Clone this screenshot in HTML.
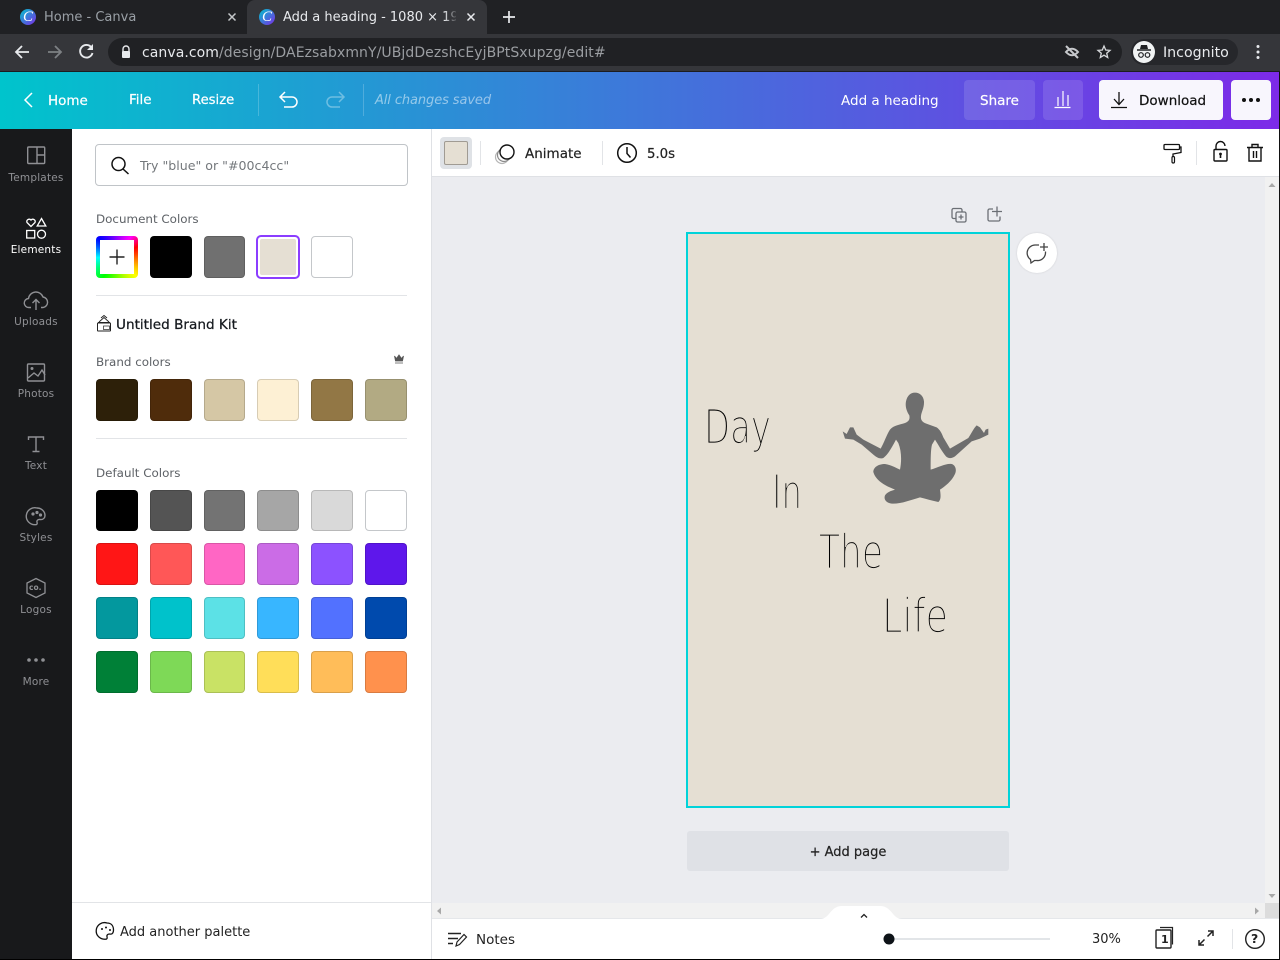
<!DOCTYPE html>
<html><head><meta charset="utf-8"><style>
html,body{margin:0;padding:0;width:1280px;height:960px;overflow:hidden;background:#ebecf0}
body{font-family:"DejaVu Sans","Liberation Sans",sans-serif;position:relative}
.a{position:absolute}
.t{position:absolute;white-space:nowrap;line-height:20px;height:20px}
.s{position:absolute;width:42px;height:42px;border-radius:4px;box-sizing:border-box;border:1px solid rgba(0,0,0,.15)}
svg{position:absolute;overflow:visible;fill:none}
.side{position:absolute;left:0;width:72px;text-align:center;font-size:10.500px;letter-spacing:.2px;color:#8f9094;line-height:14px}
</style></head><body>
<!-- chrome -->
<div class="a" style="left:0;top:0;width:1280px;height:34px;background:#202124"></div>
<div class="a" style="left:0;top:34px;width:1280px;height:37px;background:#35363a"></div>
<div class="a" style="left:0;top:71px;width:1280px;height:1px;background:#1c1d20"></div>
<div class="a" style="left:247px;top:0;width:240px;height:34px;background:#35363a;border-radius:8px 8px 0 0"></div>
<div class="a" style="left:20px;top:9px;width:16px;height:16px;border-radius:8px;background:linear-gradient(135deg,#00c4cc,#7d2ae8)"></div>
<div class="t" style="left:23px;top:7px;font:italic 15px/20px 'Liberation Serif',serif;color:#fff">C</div>
<div class="a" style="left:259px;top:9px;width:16px;height:16px;border-radius:8px;background:linear-gradient(135deg,#00c4cc,#7d2ae8)"></div>
<div class="t" style="left:262px;top:7px;font:italic 15px/20px 'Liberation Serif',serif;color:#fff">C</div>
<div class="t" style="left:44px;top:8px;font-size:13px;color:#9aa0a6">Home - Canva</div>
<div class="t" style="left:283px;top:8px;width:173px;overflow:hidden;font-size:13px;color:#e8eaed">Add a heading - 1080 × 1920</div>
<div class="a" style="left:444px;top:2px;width:14px;height:30px;background:linear-gradient(90deg,rgba(53,54,58,0),#35363a)"></div>
<svg style="left:0;top:0" width="1280" height="72">
<path d="M228.500 13.500l7 7M235.500 13.500l-7 7" stroke="#c4c7c9" stroke-width="1.500"/>
<path d="M467.500 13.500l7 7M474.500 13.500l-7 7" stroke="#e8eaed" stroke-width="1.500"/>
<path d="M509 11v12M503 17h12" stroke="#e8eaed" stroke-width="1.700"/>
<path d="M29 52H16M22 46l-6 6 6 6" stroke="#e8eaed" stroke-width="1.800"/>
<path d="M48 52h13M55 46l6 6-6 6" stroke="#7e8184" stroke-width="1.800"/>
<path d="M91.500 47.500A6.300 6.300 0 1 0 92.500 53" stroke="#e8eaed" stroke-width="1.900"/><path d="M93 44v6h-6z" fill="#e8eaed"/>
</svg>
<div class="a" style="left:108px;top:38px;width:1014px;height:28px;border-radius:14px;background:#202124"></div>
<svg style="left:0;top:0" width="1280" height="72">
<path d="M123 51.500v-2.500a3 3 0 0 1 6 0v2.500" stroke="#e8eaed" stroke-width="1.400"/><rect x="122" y="51" width="8" height="7" rx="1" fill="#e8eaed"/>
<path d="M1066 52q6-6.500 12 0-6 6.500-12 0z" stroke="#c7c9cc" stroke-width="2"/><path d="M1066 46l12 12" stroke="#c7c9cc" stroke-width="2"/>
<path d="M1104 46l1.700 4 4.300.4-3.300 2.800 1 4.300-3.700-2.300-3.700 2.300 1-4.300-3.300-2.800 4.300-.4z" stroke="#d7d9dc" stroke-width="1.300"/>
<circle cx="1258" cy="46.500" r="1.500" fill="#e8eaed"/><circle cx="1258" cy="52" r="1.500" fill="#e8eaed"/><circle cx="1258" cy="57.500" r="1.500" fill="#e8eaed"/>
</svg>
<div class="t" style="left:142px;top:43px;font-size:14px;color:#9a9da1;letter-spacing:.07px"><span style="color:#e8eaed">canva.com</span>/design/DAEzsabxmnY/UBjdDezshcEyjBPtSxupzg/edit#</div>
<div class="a" style="left:1131px;top:39px;width:107px;height:26px;border-radius:13px;background:#26272b"></div>
<div class="a" style="left:1133px;top:41px;width:22px;height:22px;border-radius:11px;background:#f1f3f4"></div>
<svg style="left:0;top:0" width="1280" height="72">
<path d="M1137 50h14" stroke="#202124" stroke-width="1.500"/><path d="M1140 49l1-4h6l1 4z" fill="#202124"/><circle cx="1141" cy="55" r="2.300" stroke="#202124" stroke-width="1.200"/><circle cx="1147.500" cy="55" r="2.300" stroke="#202124" stroke-width="1.200"/>
</svg>
<div class="t" style="left:1163px;top:43px;font-size:14.200px;color:#e8eaed">Incognito</div>

<!-- header -->
<div class="a" style="left:0;top:72px;width:1280px;height:57px;background:linear-gradient(90deg,#00c4cc,#7d2ae8)"></div>
<svg style="left:0;top:0" width="1280" height="129">
<path d="M32 93l-7 7 7 7" stroke="#fff" stroke-width="1.500"/>
<path d="M258.500 84v32M363.500 84v32" stroke="rgba(255,255,255,.2)"/>
<path d="M281 97h11a5 5 0 0 1 0 10h-8M285 92l-5 5 5 5" stroke="#fff" stroke-width="1.500"/>
<path d="M343 97h-11a5 5 0 0 0 0 10h8M339 92l5 5-5 5" stroke="rgba(255,255,255,.35)" stroke-width="1.500"/>
</svg>
<div class="t" style="left:48px;top:91px;font-size:13.500px;color:#fff;-webkit-text-stroke:.2px #fff">Home</div>
<div class="t" style="left:129px;top:90px;font-size:13.500px;color:#fff;-webkit-text-stroke:.2px #fff">File</div>
<div class="t" style="left:192px;top:91px;font-size:13.200px;color:#fff;-webkit-text-stroke:.2px #fff">Resize</div>
<div class="t" style="left:375px;top:91px;font-size:13px;font-style:italic;color:rgba(255,255,255,.5);letter-spacing:-.1px">All changes saved</div>
<div class="t" style="left:841px;top:91px;font-size:13.500px;color:#fff">Add a heading</div>
<div class="a" style="left:964px;top:80px;width:71px;height:40px;border-radius:4px;background:rgba(255,255,255,.12)"></div>
<div class="t" style="left:980px;top:91px;font-size:13.500px;color:#fff;-webkit-text-stroke:.2px #fff">Share</div>
<div class="a" style="left:1043px;top:80px;width:40px;height:40px;border-radius:4px;background:rgba(255,255,255,.12)"></div>
<div class="a" style="left:1099px;top:80px;width:124px;height:40px;border-radius:4px;background:#f8f6fd"></div>
<div class="t" style="left:1139px;top:91px;font-size:13.500px;color:#111;-webkit-text-stroke:.2px #111">Download</div>
<div class="a" style="left:1231px;top:80px;width:40px;height:40px;border-radius:4px;background:#f8f6fd"></div>
<svg style="left:0;top:0" width="1280" height="129">
<path d="M1054.500 107.500h16M1058 106v-9M1063 106V91M1068 106v-11" stroke="#fff" stroke-width="1.200"/>
<path d="M1111 107.500h16M1119 92v12M1114 99l5 5.500 5-5.500" stroke="#111" stroke-width="1.300"/>
<circle cx="1244" cy="100" r="2" fill="#111"/><circle cx="1251" cy="100" r="2" fill="#111"/><circle cx="1258" cy="100" r="2" fill="#111"/>
</svg>

<!-- sidebar -->
<div class="a" style="left:0;top:129px;width:72px;height:831px;background:#18191b"></div>
<svg style="left:0;top:0" width="72" height="700">
<g stroke="#8f9094" stroke-width="1.400"><rect x="27.700" y="147" width="17" height="16.500" rx="1"/><path d="M37 147v16.500M37 155h7.700"/></g>
<g stroke="#fff" stroke-width="1.300"><path d="M31 226.500l-4-4a2.400 2.400 0 0 1 4-2.500 2.400 2.400 0 0 1 4 2.500z"/><path d="M41.500 218.500l4.300 7.500h-8.600z"/><rect x="26.700" y="230.500" width="8" height="7.500"/><circle cx="41.500" cy="234.200" r="4"/></g>
<g stroke="#8f9094" stroke-width="1.400"><path d="M31 307.500h-2a4.500 4.500 0 0 1-.500-9 7.500 7.500 0 0 1 14.500-1.500 5.300 5.300 0 0 1 0 10.500h-2"/><path d="M36 310v-10M32.500 303l3.500-3.500 3.500 3.500"/></g>
<g stroke="#8f9094" stroke-width="1.400"><rect x="27.500" y="364" width="17" height="17" rx="1"/><path d="M28 378l6-5 4 3 4-6 3 5"/><circle cx="32" cy="368.500" r=".8" fill="#8f9094"/></g>
<g stroke="#8f9094" stroke-width="1.400"><path d="M28.500 440v-3h15v3M36 437v14.500M32.500 451.500h7"/></g>
<g stroke="#8f9094" stroke-width="1.400"><path d="M37 508a8.500 8.500 0 1 0-2 16.700c2 .2 2.500-1 2-2.500-.5-1.700 1-3 3-2.700 3.500.5 5-2 5-4 0-4-3.500-7.500-8-7.500z"/><circle cx="33" cy="514" r=".9" fill="#8f9094"/><circle cx="37" cy="512.500" r=".9" fill="#8f9094"/><circle cx="40.500" cy="515" r=".9" fill="#8f9094"/></g>
<g stroke="#8f9094" stroke-width="1.300"><path d="M36 578.500l9 4.500v10l-9 4.500-9-4.500v-10z"/></g>
<circle cx="29" cy="660" r="1.800" fill="#8f9094"/><circle cx="36" cy="660" r="1.800" fill="#8f9094"/><circle cx="43" cy="660" r="1.800" fill="#8f9094"/>
</svg>
<div class="t" style="left:29px;top:578px;font-size:7.500px;font-weight:bold;color:#8f9094">co.</div>
<div class="side" style="top:171px">Templates</div>
<div class="side" style="top:243px;color:#fff">Elements</div>
<div class="side" style="top:315px">Uploads</div>
<div class="side" style="top:387px">Photos</div>
<div class="side" style="top:459px">Text</div>
<div class="side" style="top:531px">Styles</div>
<div class="side" style="top:603px">Logos</div>
<div class="side" style="top:675px">More</div>

<!-- panel -->
<div class="a" style="left:72px;top:129px;width:359px;height:831px;background:#fff;border-right:1px solid #dfe1e5"></div>
<div class="a" style="left:95px;top:144px;width:311px;height:40px;border:1px solid #c0c4c8;border-radius:4px"></div>
<svg style="left:0;top:0" width="432" height="960">
<circle cx="118.500" cy="164" r="6.500" stroke="#111" stroke-width="1.500"/><path d="M123 169l5.500 5" stroke="#111" stroke-width="1.500"/>
<path d="M96 295.500h311M96 438.500h311M72 902.500h359" stroke="#e2e4e7"/>
<path d="M98 322.500h12M99 322l5-4.500 5 4.500M101 318l3-2.500 3 2.500" stroke="#222" stroke-width=".9"/><rect x="97.500" y="323" width="13" height="8" rx=".5" stroke="#222"/><rect x="103.500" y="326" width="6" height="3.500" stroke="#222" stroke-width=".7"/>
<path d="M394.500 356l2 2.500 2.500-3.500 2.500 3.500 2-2.500-1 5h-7zM395 363h8" stroke="#555" fill="#555" stroke-width=".8"/>
<path d="M107 923a8.300 8.300 0 1 0-2 16.200c2 .2 2.500-1 2-2.500-.5-1.600 1-3 3-2.600 2.500.4 3.500-1.800 3.500-4 0-4-2-7.100-6.500-7.100z" stroke="#111" stroke-width="1.300"/><circle cx="102" cy="929" r="1" fill="#111"/><circle cx="106" cy="927.500" r="1" fill="#111"/><circle cx="110" cy="930" r="1" fill="#111"/>
</svg>
<div class="t" style="left:140px;top:156px;font-size:12.600px;color:#74787c">Try "blue" or "#00c4cc"</div>
<div class="t" style="left:96px;top:209px;font-size:11.900px;color:#5d6166">Document Colors</div>
<div class="a" style="left:96px;top:236px;width:42px;height:42px;border-radius:4px;background:conic-gradient(from 315deg,#00f,#f0f 22%,#f00 30%,#ff0 50%,#0f0 72%,#0ff 87%,#00f)"></div>
<div class="a" style="left:100px;top:240px;width:34px;height:34px;background:#fff"></div>
<svg style="left:0;top:0" width="140" height="280"><path d="M117 249.500v15M109.500 257h15" stroke="#222" stroke-width="1.400"/></svg>
<div class="s" style="left:150px;top:236px;background:#000"></div>
<div class="s" style="left:204px;top:236px;width:41px;background:#707070"></div>
<div class="a" style="left:256px;top:235px;width:44px;height:44px;border-radius:5px;box-sizing:border-box;border:2px solid #8b3dff;background:#fff"></div>
<div class="a" style="left:260px;top:239px;width:36px;height:36px;border-radius:2px;background:#e5dfd3"></div>
<div class="s" style="left:311px;top:236px;background:#fff;border-color:#c4c7ca"></div>
<div class="t" style="left:116px;top:315px;font-size:13.600px;color:#15191e;-webkit-text-stroke:.25px #15191e">Untitled Brand Kit</div>
<div class="t" style="left:96px;top:352px;font-size:11.900px;color:#5d6166">Brand colors</div>
<div class="s" style="left:96px;top:379px;background:#2d2009"></div>
<div class="s" style="left:150px;top:379px;background:#4f2c0b"></div>
<div class="s" style="left:204px;top:379px;width:41px;background:#d5c7a5"></div>
<div class="s" style="left:257px;top:379px;background:#fdf0d4"></div>
<div class="s" style="left:311px;top:379px;background:#927745"></div>
<div class="s" style="left:365px;top:379px;background:#b2aa83"></div>
<div class="t" style="left:96px;top:463px;font-size:11.900px;color:#5d6166">Default Colors</div>
<div class="s" style="left:96px;top:490px;height:41px;background:#000"></div>
<div class="s" style="left:150px;top:490px;height:41px;background:#545454"></div>
<div class="s" style="left:204px;top:490px;width:41px;height:41px;background:#737373"></div>
<div class="s" style="left:257px;top:490px;height:41px;background:#a6a6a6"></div>
<div class="s" style="left:311px;top:490px;height:41px;background:#d9d9d9"></div>
<div class="s" style="left:365px;top:490px;height:41px;background:#fff;border-color:#c4c7ca"></div>
<div class="s" style="left:96px;top:543px;background:#ff1616"></div>
<div class="s" style="left:150px;top:543px;background:#ff5757"></div>
<div class="s" style="left:204px;top:543px;width:41px;background:#ff66c4"></div>
<div class="s" style="left:257px;top:543px;background:#cb6ce6"></div>
<div class="s" style="left:311px;top:543px;background:#8c52ff"></div>
<div class="s" style="left:365px;top:543px;background:#5e17eb"></div>
<div class="s" style="left:96px;top:597px;background:#03989e"></div>
<div class="s" style="left:150px;top:597px;background:#00c2cb"></div>
<div class="s" style="left:204px;top:597px;width:41px;background:#5ce1e6"></div>
<div class="s" style="left:257px;top:597px;background:#38b6ff"></div>
<div class="s" style="left:311px;top:597px;background:#5271ff"></div>
<div class="s" style="left:365px;top:597px;background:#004aad"></div>
<div class="s" style="left:96px;top:651px;background:#008037"></div>
<div class="s" style="left:150px;top:651px;background:#7ed957"></div>
<div class="s" style="left:204px;top:651px;width:41px;background:#c9e265"></div>
<div class="s" style="left:257px;top:651px;background:#ffde59"></div>
<div class="s" style="left:311px;top:651px;background:#ffbd59"></div>
<div class="s" style="left:365px;top:651px;background:#ff914d"></div>
<div class="t" style="left:120px;top:923px;font-size:13px;color:#222">Add another palette</div>

<!-- toolbar -->
<div class="a" style="left:432px;top:129px;width:848px;height:48px;background:#fff;border-bottom:1px solid #dfe1e5;box-sizing:border-box"></div>
<div class="a" style="left:440px;top:137px;width:32px;height:32px;border-radius:4px;background:#dfe2e6"></div>
<div class="a" style="left:444px;top:141px;width:24px;height:24px;border-radius:2px;box-sizing:border-box;border:1px solid rgba(0,0,0,.3);background:#e5dfd3"></div>
<svg style="left:0;top:0" width="1280" height="180">
<path d="M480.500 141v24M602.500 141v24M1196.500 141v24" stroke="#e2e4e7"/>
<circle cx="502" cy="157" r="6.500" stroke="#b5b5b5" stroke-width="1.200"/><circle cx="504" cy="155" r="6.500" stroke="#8b8b8b" stroke-width="1.200" fill="#fff"/><circle cx="507" cy="152" r="7" stroke="#111" stroke-width="1.400" fill="#fff"/>
<circle cx="627" cy="153" r="9.300" stroke="#111" stroke-width="1.500"/><path d="M627 147v6.500l3.500 4" stroke="#111" stroke-width="1.500"/>
<path d="M1168 144.500h10.500a1 1 0 0 1 1 1v3a1 1 0 0 1-1 1H1165a1 1 0 0 1-1-1v-3a1 1 0 0 1 1-1h3zM1179.500 147h1.500v5.500l-8 1.500v2.500" stroke="#111" stroke-width="1.300"/><rect x="1172" y="156.500" width="2.500" height="6.500" rx="1.200" stroke="#111" stroke-width="1.200"/>
<rect x="1214" y="149.500" width="13" height="11.500" rx="1" stroke="#111" stroke-width="1.400"/><path d="M1216 149v-3a4.500 4.500 0 0 1 9 0" stroke="#111" stroke-width="1.400"/><path d="M1220.500 153v5" stroke="#111" stroke-width="1.600"/><circle cx="1220.500" cy="154" r="1.400" fill="#111"/>
<path d="M1247 147.500h16M1252 147v-2.500h6v2.500M1249 148v13h12v-13M1253.500 151v7M1256.500 151v7" stroke="#111" stroke-width="1.400"/>
</svg>
<div class="t" style="left:525px;top:144px;font-size:13.500px;color:#222;-webkit-text-stroke:.2px #222">Animate</div>
<div class="t" style="left:647px;top:145px;font-size:13.300px;color:#222;-webkit-text-stroke:.2px #222">5.0s</div>

<!-- canvas -->
<svg style="left:0;top:0" width="1280" height="960">
<g stroke="#6b6f75" stroke-width="1.300"><path d="M956 218.500h-2.500a1.500 1.500 0 0 1-1.500-1.500v-7a1.500 1.500 0 0 1 1.500-1.500h7a1.500 1.500 0 0 1 1.500 1.500v2"/><rect x="956" y="212" width="10" height="10" rx="1.500"/><path d="M961 214.500v5M958.500 217h5"/>
<path d="M993 209h-3.500a1.500 1.500 0 0 0-1.500 1.500v9a1.500 1.500 0 0 0 1.500 1.500h9a1.500 1.500 0 0 0 1.500-1.500v-3M997 206.500v10M992 211.500h10"/></g>
</svg>
<div class="a" style="left:686px;top:232px;width:324px;height:576px;box-sizing:border-box;border:2px solid #00d3d9;background:#e5dfd3"></div>
<div class="a" style="left:1017px;top:233px;width:40px;height:40px;border-radius:20px;background:#fff;box-shadow:0 0 2px rgba(0,0,0,.12)"></div>
<svg style="left:0;top:0" width="1280" height="960">
<path d="M1039 245h-4a8 8 0 0 0-4.500 14.500l.5 3.500 3.500-2.500h2a8 8 0 0 0 9-7.500v-1.500" stroke="#444" stroke-width="1.300"/><path d="M1044 243v8M1040 247h8" stroke="#444" stroke-width="1.300"/>
<g transform="translate(840,388) scale(.3333)"><path fill="#6e6e6e" d="M225 14C240 14 250 24 252 40C253 60 244 72 243 84C241 98 250 104 262 108L290 118C300 125 305 135 310 148L330 182L385 150C392 140 400 122 410 112L420 118L432 135L437 125L445 122L445 140L420 152L395 160L345 205C335 212 325 212 318 205C305 190 295 170 285 155L276 170C272 185 272 215 272 245C295 238 320 225 335 228C348 232 350 248 345 258C335 280 315 295 300 305C302 320 304 335 295 342C275 338 258 332 240 328C215 335 185 347 160 347C140 347 130 335 135 322C142 312 155 308 165 305C140 295 108 280 100 252C100 238 115 228 135 228C150 230 165 238 180 245C185 220 185 190 175 165L168 155C160 170 145 200 130 210C118 214 110 208 100 200L65 170L40 155L15 152L8 130L20 138L30 118L40 118L50 140L70 155L122 182C132 165 140 140 150 125C160 112 180 110 195 105C208 100 210 92 208 82C200 70 195 55 198 40C202 24 210 14 225 14Z"/></g>
<g font-family="DejaVu Sans,sans-serif" font-weight="200" fill="#000" stroke="#e5dfd3" stroke-width=".85">
<text x="704" y="443" font-size="46" textLength="67" lengthAdjust="spacingAndGlyphs">Day</text>
<text x="772" y="508" font-size="46" textLength="30" lengthAdjust="spacingAndGlyphs">In</text>
<text x="819" y="568" font-size="46" textLength="64" lengthAdjust="spacingAndGlyphs">The</text>
<text x="882" y="632" font-size="46" textLength="66" lengthAdjust="spacingAndGlyphs">Life</text>
</g>
</svg>
<div class="a" style="left:687px;top:831px;width:322px;height:40px;border-radius:3px;background:#dfe1e6"></div>
<div class="t" style="left:687px;top:843px;width:322px;text-align:center;font-size:13px;color:#222;-webkit-text-stroke:.2px #222">+ Add page</div>

<!-- scrollbars -->
<div class="a" style="left:1265px;top:177px;width:15px;height:726px;background:#f1f1f1"></div>
<div class="a" style="left:432px;top:903px;width:848px;height:15px;background:#f1f1f1"></div>
<div class="a" style="left:1265px;top:903px;width:15px;height:15px;background:#dcdcdc"></div>
<svg style="left:0;top:0" width="1280" height="960">
<path d="M1272 183l-3.500 4h7zM1272 898l-3.500-4h7zM437 911l4-3.500v7zM1259 911l-4-3.500v7z" fill="#a8a8a8"/>
</svg>

<!-- footer -->
<div class="a" style="left:432px;top:918px;width:848px;height:41px;background:#fff;border-top:1px solid #e5e7ea;box-sizing:border-box"></div>
<svg style="left:0;top:0" width="1280" height="960">
<path d="M820 919c10 0 10-13 22-13h38c12 0 12 13 22 13z" fill="#fff"/>
<path d="M861 917.500l3-3 3 3" stroke="#222" stroke-width="1.300"/>
<path d="M448 933.500h13M448 938.500h10M448 943.500h5" stroke="#222" stroke-width="1.500"/><path d="M456 946l1-4 7-7.500 2.500 2.500-7 7.500z" stroke="#222" stroke-width="1.200"/>
<path d="M890 939h160" stroke="#e2e5e8" stroke-width="2"/><circle cx="889" cy="939" r="5.500" fill="#0e1318"/>
<rect x="1156" y="930" width="15" height="18" rx="1" stroke="#222" stroke-width="1.400"/><path d="M1160 927.500h12.500v17" stroke="#222" stroke-width="1.200"/>
<path d="M1199 945l5.500-5.500M1213 931l-5.500 5.500M1199 940v5h5M1208 931h5v5" stroke="#222" stroke-width="1.500"/>
<path d="M1232.500 929v20" stroke="#e2e4e7"/>
<circle cx="1255" cy="939" r="9.300" stroke="#222" stroke-width="1.400"/>
</svg>
<div class="t" style="left:1161px;top:930px;font-size:11px;font-weight:bold;color:#222">1</div>
<div class="t" style="left:1251px;top:929px;font-size:12.500px;font-weight:bold;color:#222">?</div>
<div class="t" style="left:476px;top:930px;font-size:13.500px;color:#222">Notes</div>
<div class="t" style="left:1092px;top:930px;font-size:13px;color:#222">30%</div>

<div class="a" style="left:0;top:959px;width:1280px;height:1px;background:#000"></div>
<div class="a" style="left:1279px;top:72px;width:1px;height:888px;background:#111"></div>
</body></html>
